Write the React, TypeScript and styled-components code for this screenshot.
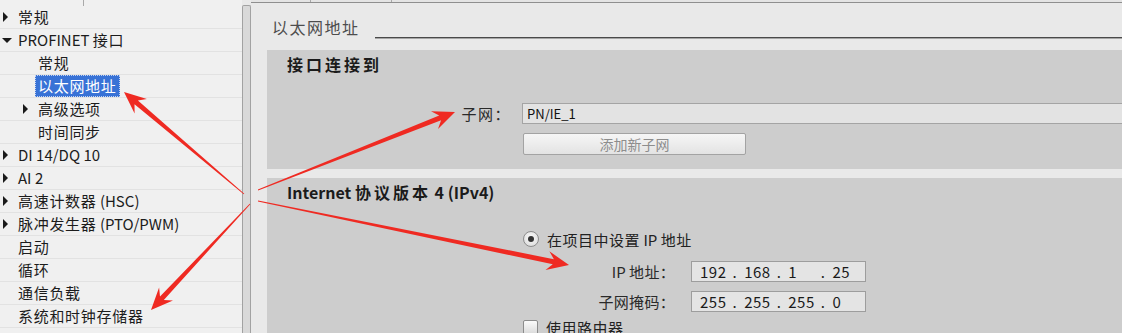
import React from "react";
import styled, { createGlobalStyle, css } from "styled-components";

const GlobalStyle = createGlobalStyle`
  html, body {
    margin: 0;
    padding: 0;
  }
  body {
    width: 1122px;
    height: 333px;
    overflow: hidden;
    background: #e9e9e9;
    font-family: "Noto Sans CJK SC", "Noto Sans", sans-serif;
    color: #222;
  }
`;

const Page = styled.div`
  position: relative;
  display: flex;
  width: 1122px;
  height: 333px;
  overflow: hidden;
`;

// ---- left tree ----

const LeftPanel = styled.div`
  --han: 0.7px;
  width: 242px;
  flex-shrink: 0;
  display: flex;
  flex-direction: column;
  background: #f0f0f0;
`;

const TabStrip = styled.div<{ $line?: boolean }>`
  display: flex;
  flex-shrink: 0;
  height: 6px;
  ${(p) =>
    p.$line &&
    css`
      height: 2px;
      background: #e4e4e4;
      border-bottom: 1px solid #8f8f8f;
    `}
`;

const TabEdge = styled.div<{ $w: number }>`
  width: ${(p) => p.$w}px;
  flex-shrink: 0;
  border-right: 1px solid #a9a9a9;
`;

const TreeRow = styled.div<{ $level: number }>`
  display: flex;
  align-items: center;
  flex-shrink: 0;
  height: 23px;
  box-sizing: border-box;
  padding-left: ${(p) => 3 + p.$level * 20}px;
  border-bottom: 1px solid #e2e2e2;
  font-size: 15px;
  line-height: 22px;
  white-space: nowrap;
  color: #1c1c1c;
`;

const CaretSlot = styled.span`
  width: 15px;
  flex-shrink: 0;
  display: flex;
  align-items: center;
`;

const Caret = styled.span<{ $open?: boolean }>`
  width: 0;
  height: 0;
  ${(p) =>
    p.$open
      ? css`
          margin-left: -1px;
          border-top: 5px solid #1a1a1a;
          border-left: 5px solid transparent;
          border-right: 5px solid transparent;
        `
      : css`
          border-left: 5px solid #1a1a1a;
          border-top: 5px solid transparent;
          border-bottom: 5px solid transparent;
        `}
`;

const NodeText = styled.span<{ $selected?: boolean }>`
  ${(p) =>
    p.$selected &&
    css`
      margin-left: -3px;
      padding: 0 2px;
      line-height: 20px;
      background: #3872d6;
      color: #fff;
      border: 1px dotted #c4d4f2;
    `}
`;

const Splitter = styled.div`
  width: 7px;
  margin-top: 5px;
  flex-shrink: 0;
  background: #d9d9d9;
  border: 1px solid #a2a2a2;
  border-bottom: none;
  border-radius: 2px 2px 0 0;
`;

// ---- right editor ----

const RightPanel = styled.div`
  flex: 1;
  min-width: 0;
  display: flex;
  flex-direction: column;
  background: #e9e9e9;
`;

const TitleRow = styled.div`
  display: flex;
  align-items: center;
  flex-shrink: 0;
  height: 47px;
  padding-left: 21px;
`;

const Title = styled.span`
  --han: 1.5px;
  font-size: 16px;
  color: #4d4d4d;
  white-space: nowrap;
`;

const TitleRule = styled.div`
  flex: 1;
  align-self: flex-end;
  height: 1px;
  margin: 0 0 11px 15px;
  background: #4a4a4a;
  border-bottom: 1px solid #a6a6a6;
`;

const Section = styled.div<{ $height?: number }>`
  display: flex;
  flex-direction: column;
  box-sizing: border-box;
  margin-left: 16px;
  padding: 2px 0 0 20px;
  background: #cdcdcd;
  overflow: hidden;
  ${(p) => (p.$height ? `height: ${p.$height}px; flex-shrink: 0;` : "flex: 1;")}
  & + & {
    margin-top: 9px;
  }
`;

const Heading = styled.div`
  --han: 3px;
  font-size: 16px;
  font-weight: 700;
  line-height: 24px;
  color: #1b1b1b;
  white-space: nowrap;
`;

const FieldRow = styled.div<{ $labelWidth: number; $gap: number; $top: number }>`
  display: grid;
  grid-template-columns: ${(p) => p.$labelWidth}px 1fr;
  column-gap: ${(p) => p.$gap}px;
  align-items: center;
  height: 21px;
  margin-top: ${(p) => p.$top}px;
`;

const Label = styled.span<{ $han?: number }>`
  --han: ${(p) => p.$han ?? 0.3}px;
  text-align: right;
  font-size: 15px;
  line-height: 21px;
  color: #2a2a2a;
  white-space: nowrap;
`;

const TextField = styled.div`
  display: flex;
  align-items: center;
  height: 21px;
  box-sizing: border-box;
  margin-right: -6px;
  padding-left: 4px;
  background: #e3e3e3;
  border: 1px solid #a4a4a4;
  font-size: 13px;
  color: #111;
`;

const IpField = styled.div`
  display: flex;
  align-items: center;
  width: 175px;
  height: 21px;
  box-sizing: border-box;
  padding-left: 8px;
  background: #e4e4e4;
  border: 1px solid #9d9d9d;
  font-size: 15px;
  letter-spacing: 0.5px;
  color: #1a1a1a;
`;

const Octet = styled.span`
  width: 34px;
`;

const Dot = styled.span`
  width: 12px;
`;

const ControlRow = styled.div<{ $top: number }>`
  display: flex;
  align-items: center;
  gap: 8px;
  height: 18px;
  margin: ${(p) => p.$top}px 0 0 236px;
  font-size: 15px;
  white-space: nowrap;
  --han: 0.5px;
`;

const Button = styled.button`
  width: 223px;
  height: 22px;
  margin: 9px 0 0 236px;
  padding: 0;
  border: 1px solid #a3a3a3;
  border-radius: 2px;
  background: linear-gradient(#f6f6f6, #e3e3e3);
  font-family: inherit;
  font-size: 14px;
  color: #8d8d8d;
`;

const Radio = styled.span`
  width: 16px;
  height: 16px;
  box-sizing: border-box;
  flex-shrink: 0;
  display: flex;
  align-items: center;
  justify-content: center;
  border: 1px solid #8c8c8c;
  border-radius: 50%;
  background: radial-gradient(circle at 50% 40%, #fbfbfb, #d6d6d6);
  &::after {
    content: "";
    width: 6px;
    height: 6px;
    border-radius: 50%;
    background: #333;
  }
`;

const Checkbox = styled.span`
  width: 15px;
  height: 15px;
  box-sizing: border-box;
  flex-shrink: 0;
  border: 1px solid #8c8c8c;
  border-radius: 2px;
  background: linear-gradient(#fafafa, #dadada);
`;

const Han = styled.span`
  letter-spacing: var(--han, 0px);
`;

// ---- annotation arrows ----

const ArrowLayer = styled.svg`
  position: absolute;
  left: 0;
  top: 0;
  pointer-events: none;
`;

type Pt = [number, number];

const arrowPoints = (tail: Pt, tip: Pt) => {
  const dx = tip[0] - tail[0];
  const dy = tip[1] - tail[1];
  const len = Math.hypot(dx, dy);
  const ux = dx / len;
  const uy = dy / len;
  const nx = -uy;
  const ny = ux;
  const at = (along: number, side: number): string =>
    `${(tip[0] - ux * along + nx * side).toFixed(1)},${(tip[1] - uy * along + ny * side).toFixed(1)}`;
  const head = 22;
  const neck = 16;
  return [
    at(len, 0.4),
    at(neck, 2.6),
    at(head, 9.5),
    at(0, 0),
    at(head, -9.5),
    at(neck, -2.6),
    at(len, -0.4),
  ].join(" ");
};

const arrows: [Pt, Pt][] = [
  [[244, 194], [124, 92]],
  [[258, 190], [455, 112]],
  [[258, 201], [569, 265]],
  [[250, 204], [151, 310]],
];

// split out the Chinese runs so they can take their own letter spacing
const spaced = (text: string) =>
  text
    .split(/([\u3400-\u9fff\uff01-\uff60]+)/)
    .map((part, i) => (i % 2 ? <Han key={i}>{part}</Han> : part));

interface TreeNode {
  label: string;
  level: number;
  caret?: "open" | "closed";
  selected?: boolean;
}

const tree: TreeNode[] = [
  { label: "常规", level: 0, caret: "closed" },
  { label: "PROFINET 接口", level: 0, caret: "open" },
  { label: "常规", level: 1 },
  { label: "以太网地址", level: 1, selected: true },
  { label: "高级选项", level: 1, caret: "closed" },
  { label: "时间同步", level: 1 },
  { label: "DI 14/DQ 10", level: 0, caret: "closed" },
  { label: "AI 2", level: 0, caret: "closed" },
  { label: "高速计数器 (HSC)", level: 0, caret: "closed" },
  { label: "脉冲发生器 (PTO/PWM)", level: 0, caret: "closed" },
  { label: "启动", level: 0 },
  { label: "循环", level: 0 },
  { label: "通信负载", level: 0 },
  { label: "系统和时钟存储器", level: 0 },
];

const IpValue: React.FC<{ parts: string[] }> = ({ parts }) => (
  <IpField>
    {parts.map((p, i) => (
      <React.Fragment key={i}>
        <Octet>{p}</Octet>
        {i < parts.length - 1 && <Dot>.</Dot>}
      </React.Fragment>
    ))}
  </IpField>
);

const App: React.FC = () => {
  return (
    <Page>
      <GlobalStyle />
      <LeftPanel>
        <TabStrip>
          <TabEdge $w={83} />
        </TabStrip>
        {tree.map((node, i) => (
          <TreeRow key={i} $level={node.level}>
            <CaretSlot>{node.caret && <Caret $open={node.caret === "open"} />}</CaretSlot>
            <NodeText $selected={node.selected}>{spaced(node.label)}</NodeText>
          </TreeRow>
        ))}
      </LeftPanel>

      <Splitter />

      <RightPanel>
        <TabStrip $line>
          <TabEdge $w={59} />
          <TabEdge $w={80} />
        </TabStrip>
        <TitleRow>
          <Title>{spaced("以太网地址")}</Title>
          <TitleRule />
        </TitleRow>

        <Section $height={119}>
          <Heading>{spaced("接口连接到")}</Heading>
          <FieldRow $labelWidth={224} $gap={11} $top={27}>
            <Label $han={1.5}>{spaced("子网：")}</Label>
            <TextField>PN/IE_1</TextField>
          </FieldRow>
          <Button type="button">添加新子网</Button>
        </Section>

        <Section>
          <Heading>Internet {spaced("协议版本")} 4 (IPv4)</Heading>
          <ControlRow $top={26}>
            <Radio />
            <span>{spaced("在项目中设置")} IP {spaced("地址")}</span>
          </ControlRow>
          <FieldRow $labelWidth={388} $gap={16} $top={13}>
            <Label>IP {spaced("地址：")}</Label>
            <IpValue parts={["192", "168", "1", "25"]} />
          </FieldRow>
          <FieldRow $labelWidth={388} $gap={16} $top={9}>
            <Label>{spaced("子网掩码：")}</Label>
            <IpValue parts={["255", "255", "255", "0"]} />
          </FieldRow>
          <ControlRow $top={6}>
            <Checkbox />
            <span>{spaced("使用路由器")}</span>
          </ControlRow>
        </Section>
      </RightPanel>

      <ArrowLayer width={1122} height={333} viewBox="0 0 1122 333">
        {arrows.map(([tail, tip], i) => (
          <polygon key={i} points={arrowPoints(tail, tip)} fill="#ef2a22" />
        ))}
      </ArrowLayer>
    </Page>
  );
};

export default App;
